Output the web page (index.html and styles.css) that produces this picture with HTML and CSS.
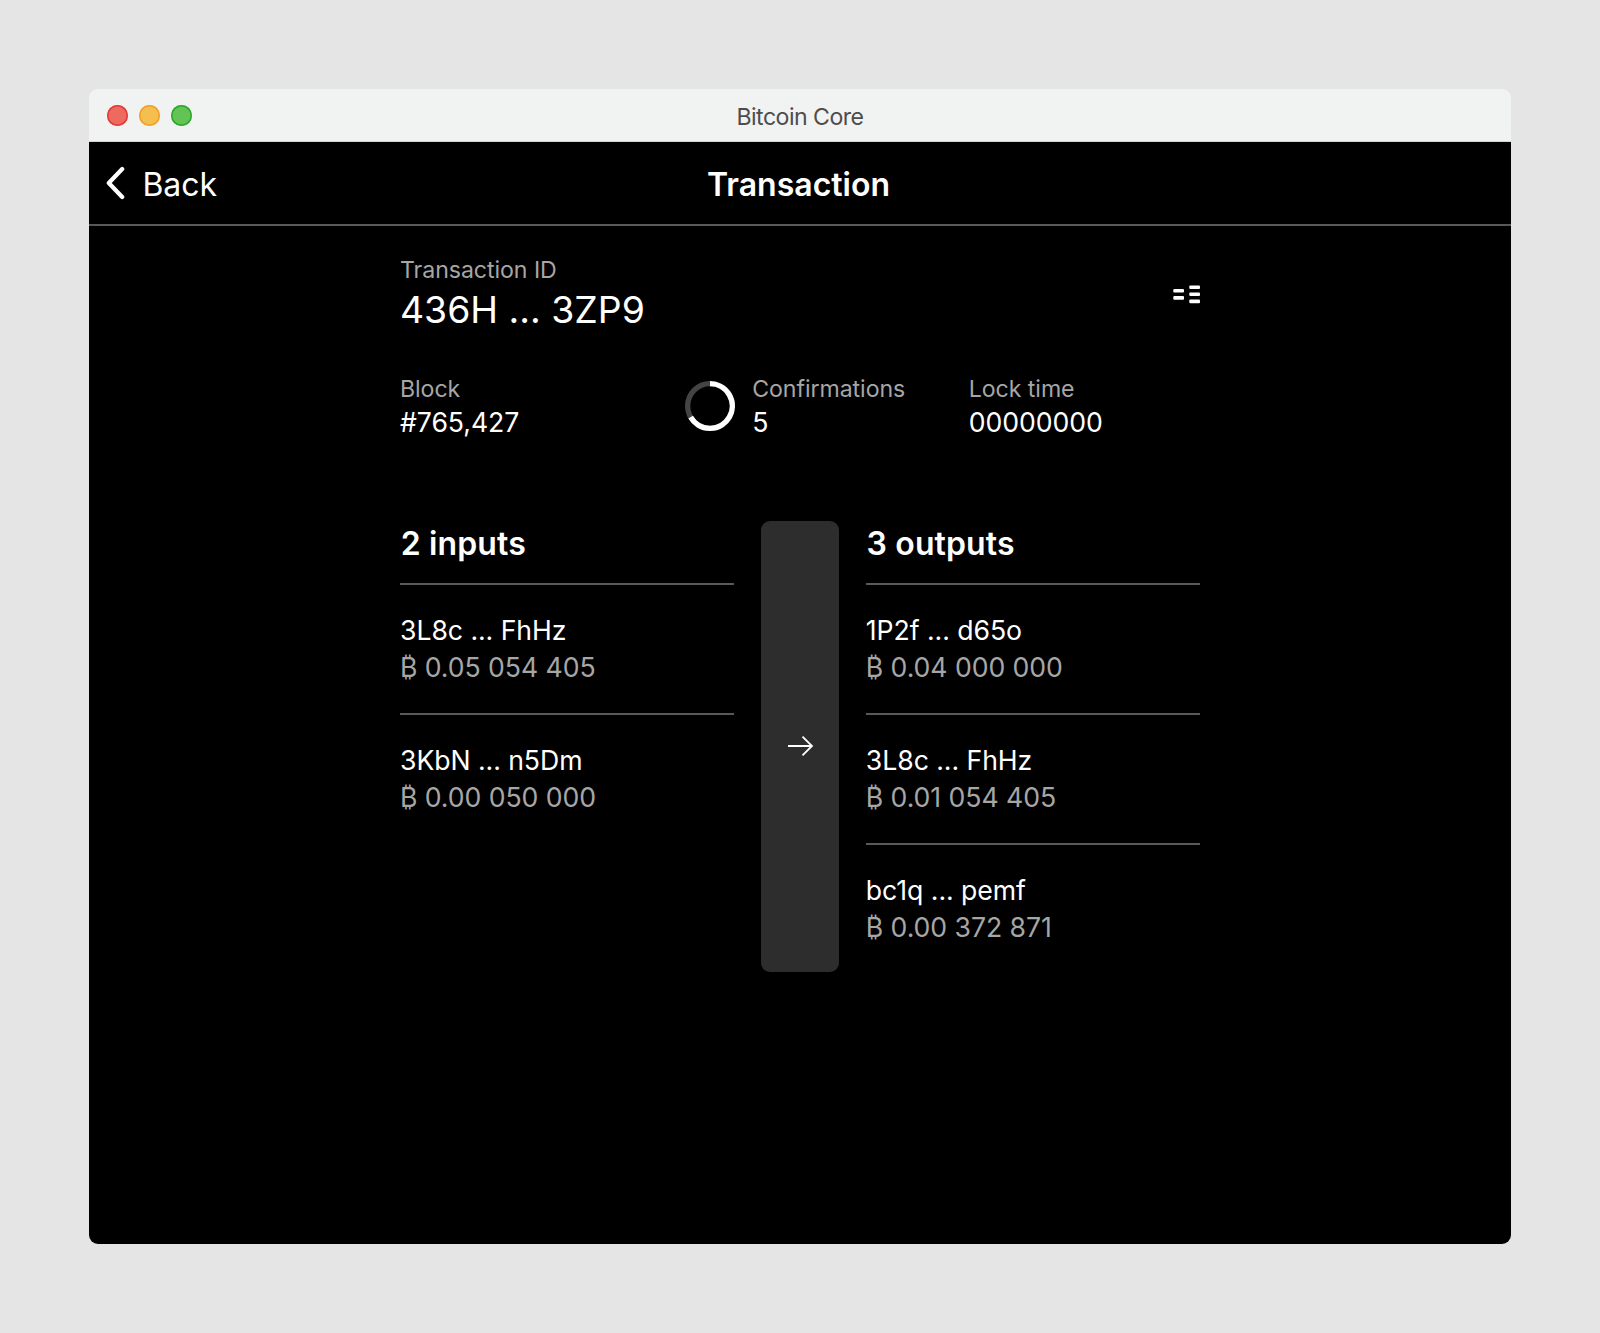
FILE: index.html
```html
<!DOCTYPE html>
<html lang="en">
<head>
<meta charset="utf-8">
<title>Bitcoin Core</title>
<link rel="stylesheet" href="styles.css">
</head>
<body>
<div class="window">
  <div class="titlebar">
    <div class="lights"><span class="light red"></span><span class="light yellow"></span><span class="light green"></span></div>
    <div class="titlebar-text">Bitcoin Core</div>
  </div>
  <div class="screen">
    <header class="nav">
      <a class="back">
        <svg width="20" height="34" viewBox="0 0 20 34" fill="none" stroke="#fff" stroke-width="4.2" stroke-linecap="round" stroke-linejoin="round"><path d="M16.2 3 2.8 17 16.2 31"/></svg>
        <span class="back-text">Back</span>
      </a>
      <h1 class="nav-title">Transaction</h1>
    </header>
    <main class="content">
      <section class="summary">
        <div>
          <div class="label">Transaction ID</div>
          <div class="txid">436H ... 3ZP9</div>
        </div>
        <svg class="view-icon" width="27" height="19" viewBox="0 0 27 19" fill="#fff"><rect x="0.3" y="4" width="10.7" height="3.6" rx="1"/><rect x="0.3" y="11.1" width="10.7" height="3.6" rx="1"/><rect x="16.3" y="0.4" width="10.7" height="3.6" rx="1"/><rect x="16.3" y="7.5" width="10.7" height="3.6" rx="1"/><rect x="16.3" y="14.6" width="10.7" height="3.6" rx="1"/></svg>
      </section>
      <section class="facts">
        <div>
          <div class="label">Block</div>
          <div class="value">#765,427</div>
        </div>
        <div class="confirmations">
          <svg class="ring" width="50" height="50" viewBox="0 0 50 50" fill="none" stroke-width="5.33"><circle cx="25" cy="25" r="22.33" stroke="#444"/><path d="M25 2.67A22.33 22.33 0 1 1 5.66 36.17" stroke="#fff"/></svg>
          <div>
            <div class="label">Confirmations</div>
            <div class="value">5</div>
          </div>
        </div>
        <div>
          <div class="label">Lock time</div>
          <div class="value">00000000</div>
        </div>
      </section>
      <section class="flow">
        <div class="column">
          <h2 class="column-title">2 inputs</h2>
          <div class="item"><div class="value">3L8c ... FhHz</div><div class="value amount">₿ 0.05 054 405</div></div>
          <div class="item"><div class="value">3KbN ... n5Dm</div><div class="value amount">₿ 0.00 050 000</div></div>
        </div>
        <div class="divider">
          <svg width="28" height="24" viewBox="0 0 28 24" fill="none" stroke="#fff" stroke-width="1.8"><path d="M2 12H26M16.5 2.6 26 12l-9.5 9.4"/></svg>
        </div>
        <div class="column">
          <h2 class="column-title">3 outputs</h2>
          <div class="item"><div class="value">1P2f ... d65o</div><div class="value amount">₿ 0.04 000 000</div></div>
          <div class="item"><div class="value">3L8c ... FhHz</div><div class="value amount">₿ 0.01 054 405</div></div>
          <div class="item"><div class="value">bc1q ... pemf</div><div class="value amount">₿ 0.00 372 871</div></div>
        </div>
      </section>
    </main>
  </div>
</div>
</body>
</html>
```
FILE: styles.css
```css
* { box-sizing: border-box; }

body {
  margin: 0;
  height: 1333px;
  padding: 89px 88.9px;
  background: #e5e5e5;
  font-family: Inter, "Liberation Sans", sans-serif;
  color: #fff;
}

svg { display: block; flex: none; }

.window {
  display: flex;
  flex-direction: column;
  height: 1155.4px;
}

.titlebar {
  display: grid;
  grid-template-columns: 1fr auto 1fr;
  align-items: center;
  height: 53px;
  border-radius: 9px 9px 0 0;
  background: #f1f3f2;
  border-bottom: 1px solid #d2d4d3;
}

.screen {
  flex: 1;
  border-radius: 0 0 9px 9px;
  background: #000;
}

.titlebar-text {
  padding-top: 3px;
  font-size: 23.11px;
  line-height: 28px;
  letter-spacing: -0.52px;
  color: #4d4d4d;
}

.lights { display: flex; gap: 10.2px; padding-left: 17.8px; padding-top: 1px; }
.light { width: 21.8px; height: 21.8px; border-radius: 50%; }
.red { background: #ee6a5f; box-shadow: inset 0 0 0 1.5px #e33a36; }
.yellow { background: #f5bf4f; box-shadow: inset 0 0 0 1.5px #f0a02c; }
.green { background: #61c455; box-shadow: inset 0 0 0 1.5px #2fa52f; }

.nav {
  display: grid;
  grid-template-columns: 1fr auto 1fr;
  align-items: center;
  height: 84px;
  border-bottom: 2px solid #595959;
}

.back {
  display: flex;
  align-items: center;
  gap: 16.5px;
  padding-left: 17px;
  font-size: 32px;
  line-height: 40px;
}

.back-text { padding-top: 3px; }

.nav-title {
  margin: 0;
  padding: 3px 3px 0 0;
  font-size: 32px;
  font-weight: 600;
  line-height: 40px;
}

.content { width: 800px; margin: 0 auto; padding-top: 30px; }

.summary { display: flex; justify-content: space-between; align-items: center; }

.label {
  margin-bottom: 3px;
  font-size: 23.11px;
  line-height: 28px;
  letter-spacing: -0.05px;
  color: #a6a6a6;
}

.txid { font-size: 37.33px; line-height: 45px; }

.value { font-size: 26.67px; line-height: 32px; letter-spacing: -0.07px; }

.facts {
  display: grid;
  grid-template-columns: 284.4px 284.4px 1fr;
  margin-top: 43px;
}

.confirmations { display: flex; align-items: center; gap: 17.4px; }

.ring { margin: 0 0 1px 0.4px; }

.flow {
  display: grid;
  grid-template-columns: 334.2px 78px 334.2px;
  justify-content: space-between;
  margin-top: 83px;
}

.column-title {
  margin: 0 0 17px;
  padding: 1px 0 0 0.8px;
  font-size: 32px;
  font-weight: 600;
  line-height: 44px;
  letter-spacing: 0.12px;
}

.item { padding: 29px 0; border-top: 2px solid #595959; }

.amount { margin: 5.2px 0 0.58px; color: #a6a6a6; }

.divider {
  display: flex;
  align-items: center;
  justify-content: center;
  padding-bottom: 1px;
  border-radius: 9px;
  background: #2d2d2d;
}
```
